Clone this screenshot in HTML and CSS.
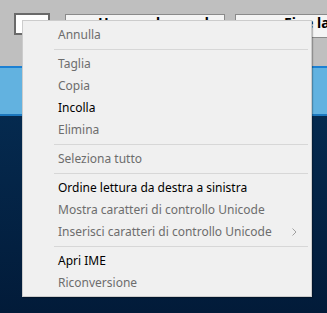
FILE: index.html
```html
<!DOCTYPE html>
<html lang="it">
<head>
<meta charset="UTF-8">
<title>Menu contestuale</title>
<link rel="stylesheet" href="styles.css">
</head>
<body>

<div class="toolbar">
    <div class="field"></div>
    <div class="btn btn-wide">Ho una domanda</div>
    <div class="btn btn-end">Fine lavoro</div>
</div>
<div class="band"></div>
<div class="desktop"></div>

<!-- context menu -->
<div class="menu">
    <div class="item off">Annulla</div>
    <div class="sep"></div>
    <div class="item off">Taglia</div>
    <div class="item off">Copia</div>
    <div class="item">Incolla</div>
    <div class="item off">Elimina</div>
    <div class="sep"></div>
    <div class="item off">Seleziona tutto</div>
    <div class="sep"></div>
    <div class="item">Ordine lettura da destra a sinistra</div>
    <div class="item off">Mostra caratteri di controllo Unicode</div>
    <div class="item off sub">Inserisci caratteri di controllo Unicode
        <svg class="arrow" width="5" height="8" viewBox="0 0 5 8"><path d="M0.5 0.5 L4 4 L0.5 7.5" fill="none" stroke="#a0a0a0" stroke-width="1"/></svg>
    </div>
    <div class="sep"></div>
    <div class="item">Apri IME</div>
    <div class="item off">Riconversione</div>
</div>

</body>
</html>
```

FILE: styles.css
```css
:root{
    --gray:#bfbfbf;
    --menu:#f0f0f0;
    --text:#000;
    --muted:#6d6d6d;
    --line:#d7d7d7;
}

*{
    box-sizing:border-box;
}

body{
    margin:0;
    height:313px;
    overflow:hidden;
    display:flex;
    flex-direction:column;
    font-family:"Noto Sans", "Open Sans", sans-serif;
    background:#03203f;
}

/* top bar */
.toolbar{
    height:66px;
    background:var(--gray);
    display:flex;
    align-items:flex-start;
    padding:13px 0 0 14px;
}

.field{
    width:36px;
    height:22px;
    background:#fff;
    border:2px solid #6a6a6a;
}

.btn{
    height:24px;
    margin-top:1px;
    background:#f4f4f4;
    border:1px solid #8a8a8a;
    font-weight:700;
    font-size:14px;
    line-height:16px;
    white-space:nowrap;
    overflow:hidden;
}

.btn-wide{
    width:160px;
    margin-left:15px;
    padding-left:32px;
}

.btn-end{
    flex:1;
    margin-left:10px;
    padding-left:48px;
    border-right:none;
}

/* light blue band */
.band{
    height:50px;
    background:#62b2e0;
    border-top:2px solid #1b80d3;
    border-bottom:2px solid #1c78bf;
    box-shadow:0 2px 0 #0b3155;
}

.desktop{
    flex:1;
    background:linear-gradient(#052a4f,#021b39);
}

/* menu */
.menu{
    position:absolute;
    left:22px;
    top:20px;
    width:290px;
    padding:3px 2px 2px 2px;
    background:var(--menu);
    border:1px solid #cccccc;
    box-shadow:1px 1px 1px rgba(0,0,0,.25);
    font-size:12px;
}

.item{
    height:22px;
    line-height:22px;
    padding-left:33px;
    color:var(--text);
    white-space:nowrap;
    position:relative;
}

.item.off{
    color:var(--muted);
}

.arrow{
    position:absolute;
    right:12px;
    top:7px;
}

.sep{
    height:7px;
    margin-left:29px;
    margin-right:1px;
    padding-top:3px;
}

.sep::before{
    content:"";
    display:block;
    height:1px;
    background:var(--line);
}
```
